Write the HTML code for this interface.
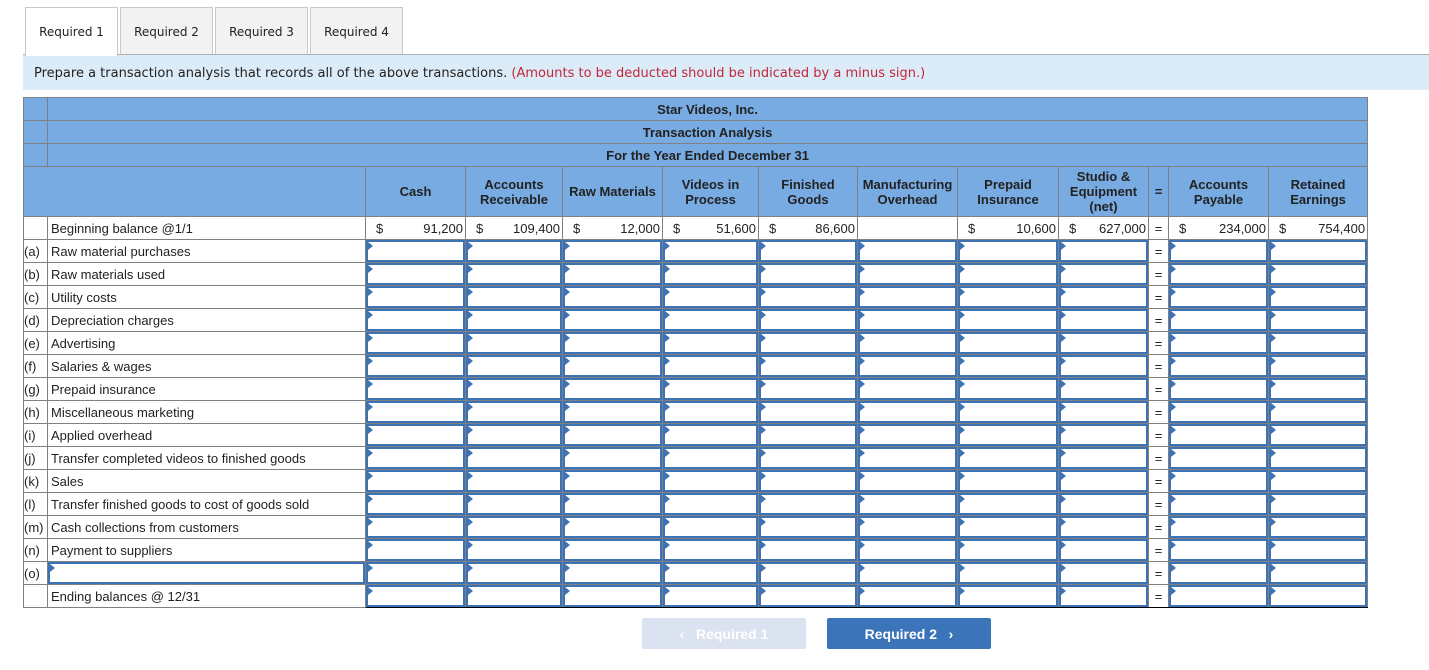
<!DOCTYPE html>
<html><head><meta charset="utf-8"><style>
body{margin:0;background:#fff;width:1429px;height:670px;position:relative;overflow:hidden;font-family:"Liberation Sans",Arial,sans-serif;color:#222}
.tab{position:absolute;top:7px;height:46px;width:91px;border:1px solid #c8c8c8;border-bottom:none;background:#f2f2f2;font:12px "DejaVu Sans",Verdana,sans-serif;color:#222;text-align:center;line-height:48px}
.tab.on{background:#fff;height:48px;z-index:2}
.tline{position:absolute;top:54px;left:23px;width:1406px;height:1px;background:#b0b0b0}
.inst{position:absolute;top:55px;left:23px;width:1406px;height:35px;background:#dcebf8;font:13px "DejaVu Sans",Verdana,sans-serif;line-height:37px;text-indent:11px;color:#222}
.inst span{color:#c0283a}
table{position:absolute;left:23px;top:97px;border-collapse:collapse;table-layout:fixed;width:1345px;font-size:13px}
td{border:1px solid #808080;height:22px;padding:0;position:relative;white-space:nowrap;overflow:hidden}
.b{background:#77abe2}
.t td.b{text-align:center;font-weight:bold}
.h td{height:49px;text-align:center;font-weight:bold;line-height:15px}
.l{padding-left:3px}
.m{text-align:right;padding-right:2px}
.m i{font-style:normal;position:absolute;left:10px;top:4px}
.in{position:absolute;left:0;top:0;right:0;bottom:0;border:2px solid #3d72b4}
.in:before{content:"";position:absolute;left:0;top:0;border-left:5px solid #3d72b4;border-top:4px solid transparent;border-bottom:4px solid transparent}
.e{text-align:center}
.end td.x{border-top:1px solid #000;border-bottom:1px solid #000;box-shadow:0 2px 0 #fff,0 3px 0 #000}
.btn{position:absolute;top:618px;height:31px;width:164px;border-radius:2px;color:#fff;font-weight:bold;font-size:14px;text-align:center;line-height:32px}
</style></head><body>
<div class="tab on" style="left:25px">Required 1</div>
<div class="tab" style="left:120px">Required 2</div>
<div class="tab" style="left:215px">Required 3</div>
<div class="tab" style="left:310px">Required 4</div>
<div class="tline"></div>
<div class="inst">Prepare a transaction analysis that records all of the above transactions. <span>(Amounts to be deducted should be indicated by a minus sign.)</span></div>
<table>
<colgroup><col style="width:24px"><col style="width:318px"><col style="width:100px"><col style="width:97px"><col style="width:100px"><col style="width:96px"><col style="width:99px"><col style="width:100px"><col style="width:101px"><col style="width:90px"><col style="width:20px"><col style="width:100px"><col style="width:99px"></colgroup>
<tr class="t"><td class="b"></td><td class="b" colspan="12">Star Videos, Inc.</td></tr>
<tr class="t"><td class="b"></td><td class="b" colspan="12">Transaction Analysis</td></tr>
<tr class="t"><td class="b"></td><td class="b" colspan="12">For the Year Ended December 31</td></tr>
<tr class="h"><td class="b" colspan="2"></td><td class="b">Cash</td><td class="b">Accounts<br>Receivable</td><td class="b">Raw Materials</td><td class="b">Videos in<br>Process</td><td class="b">Finished<br>Goods</td><td class="b">Manufacturing<br>Overhead</td><td class="b">Prepaid<br>Insurance</td><td class="b">Studio &amp;<br>Equipment<br>(net)</td><td class="b">=</td><td class="b">Accounts<br>Payable</td><td class="b">Retained<br>Earnings</td></tr>
<tr><td></td><td class="l">Beginning balance @1/1</td><td class="m"><i>$</i>91,200</td><td class="m"><i>$</i>109,400</td><td class="m"><i>$</i>12,000</td><td class="m"><i>$</i>51,600</td><td class="m"><i>$</i>86,600</td><td></td><td class="m"><i>$</i>10,600</td><td class="m"><i>$</i>627,000</td><td class="e">=</td><td class="m"><i>$</i>234,000</td><td class="m"><i>$</i>754,400</td></tr>
<tr><td>(a)</td><td class="l">Raw material purchases</td><td><div class="in"></div></td><td><div class="in"></div></td><td><div class="in"></div></td><td><div class="in"></div></td><td><div class="in"></div></td><td><div class="in"></div></td><td><div class="in"></div></td><td><div class="in"></div></td><td class="e">=</td><td><div class="in"></div></td><td><div class="in"></div></td></tr>
<tr><td>(b)</td><td class="l">Raw materials used</td><td><div class="in"></div></td><td><div class="in"></div></td><td><div class="in"></div></td><td><div class="in"></div></td><td><div class="in"></div></td><td><div class="in"></div></td><td><div class="in"></div></td><td><div class="in"></div></td><td class="e">=</td><td><div class="in"></div></td><td><div class="in"></div></td></tr>
<tr><td>(c)</td><td class="l">Utility costs</td><td><div class="in"></div></td><td><div class="in"></div></td><td><div class="in"></div></td><td><div class="in"></div></td><td><div class="in"></div></td><td><div class="in"></div></td><td><div class="in"></div></td><td><div class="in"></div></td><td class="e">=</td><td><div class="in"></div></td><td><div class="in"></div></td></tr>
<tr><td>(d)</td><td class="l">Depreciation charges</td><td><div class="in"></div></td><td><div class="in"></div></td><td><div class="in"></div></td><td><div class="in"></div></td><td><div class="in"></div></td><td><div class="in"></div></td><td><div class="in"></div></td><td><div class="in"></div></td><td class="e">=</td><td><div class="in"></div></td><td><div class="in"></div></td></tr>
<tr><td>(e)</td><td class="l">Advertising</td><td><div class="in"></div></td><td><div class="in"></div></td><td><div class="in"></div></td><td><div class="in"></div></td><td><div class="in"></div></td><td><div class="in"></div></td><td><div class="in"></div></td><td><div class="in"></div></td><td class="e">=</td><td><div class="in"></div></td><td><div class="in"></div></td></tr>
<tr><td>(f)</td><td class="l">Salaries &amp; wages</td><td><div class="in"></div></td><td><div class="in"></div></td><td><div class="in"></div></td><td><div class="in"></div></td><td><div class="in"></div></td><td><div class="in"></div></td><td><div class="in"></div></td><td><div class="in"></div></td><td class="e">=</td><td><div class="in"></div></td><td><div class="in"></div></td></tr>
<tr><td>(g)</td><td class="l">Prepaid insurance</td><td><div class="in"></div></td><td><div class="in"></div></td><td><div class="in"></div></td><td><div class="in"></div></td><td><div class="in"></div></td><td><div class="in"></div></td><td><div class="in"></div></td><td><div class="in"></div></td><td class="e">=</td><td><div class="in"></div></td><td><div class="in"></div></td></tr>
<tr><td>(h)</td><td class="l">Miscellaneous marketing</td><td><div class="in"></div></td><td><div class="in"></div></td><td><div class="in"></div></td><td><div class="in"></div></td><td><div class="in"></div></td><td><div class="in"></div></td><td><div class="in"></div></td><td><div class="in"></div></td><td class="e">=</td><td><div class="in"></div></td><td><div class="in"></div></td></tr>
<tr><td>(i)</td><td class="l">Applied overhead</td><td><div class="in"></div></td><td><div class="in"></div></td><td><div class="in"></div></td><td><div class="in"></div></td><td><div class="in"></div></td><td><div class="in"></div></td><td><div class="in"></div></td><td><div class="in"></div></td><td class="e">=</td><td><div class="in"></div></td><td><div class="in"></div></td></tr>
<tr><td>(j)</td><td class="l">Transfer completed videos to finished goods</td><td><div class="in"></div></td><td><div class="in"></div></td><td><div class="in"></div></td><td><div class="in"></div></td><td><div class="in"></div></td><td><div class="in"></div></td><td><div class="in"></div></td><td><div class="in"></div></td><td class="e">=</td><td><div class="in"></div></td><td><div class="in"></div></td></tr>
<tr><td>(k)</td><td class="l">Sales</td><td><div class="in"></div></td><td><div class="in"></div></td><td><div class="in"></div></td><td><div class="in"></div></td><td><div class="in"></div></td><td><div class="in"></div></td><td><div class="in"></div></td><td><div class="in"></div></td><td class="e">=</td><td><div class="in"></div></td><td><div class="in"></div></td></tr>
<tr><td>(l)</td><td class="l">Transfer finished goods to cost of goods sold</td><td><div class="in"></div></td><td><div class="in"></div></td><td><div class="in"></div></td><td><div class="in"></div></td><td><div class="in"></div></td><td><div class="in"></div></td><td><div class="in"></div></td><td><div class="in"></div></td><td class="e">=</td><td><div class="in"></div></td><td><div class="in"></div></td></tr>
<tr><td>(m)</td><td class="l">Cash collections from customers</td><td><div class="in"></div></td><td><div class="in"></div></td><td><div class="in"></div></td><td><div class="in"></div></td><td><div class="in"></div></td><td><div class="in"></div></td><td><div class="in"></div></td><td><div class="in"></div></td><td class="e">=</td><td><div class="in"></div></td><td><div class="in"></div></td></tr>
<tr><td>(n)</td><td class="l">Payment to suppliers</td><td><div class="in"></div></td><td><div class="in"></div></td><td><div class="in"></div></td><td><div class="in"></div></td><td><div class="in"></div></td><td><div class="in"></div></td><td><div class="in"></div></td><td><div class="in"></div></td><td class="e">=</td><td><div class="in"></div></td><td><div class="in"></div></td></tr>
<tr><td>(o)</td><td><div class="in"></div></td><td><div class="in"></div></td><td><div class="in"></div></td><td><div class="in"></div></td><td><div class="in"></div></td><td><div class="in"></div></td><td><div class="in"></div></td><td><div class="in"></div></td><td><div class="in"></div></td><td class="e">=</td><td><div class="in"></div></td><td><div class="in"></div></td></tr>
<tr class="end"><td></td><td class="l">Ending balances @ 12/31</td><td class="x"><div class="in"></div></td><td class="x"><div class="in"></div></td><td class="x"><div class="in"></div></td><td class="x"><div class="in"></div></td><td class="x"><div class="in"></div></td><td class="x"><div class="in"></div></td><td class="x"><div class="in"></div></td><td class="x"><div class="in"></div></td><td class="e x">=</td><td class="x"><div class="in"></div></td><td class="x"><div class="in"></div></td></tr>
</table>
<div class="btn" style="left:642px;background:#dae3ef">&#8249;&nbsp;&nbsp;&nbsp;Required 1</div>
<div class="btn" style="left:827px;background:#3b74b8">Required 2&nbsp;&nbsp;&nbsp;&#8250;</div>
</body></html>
